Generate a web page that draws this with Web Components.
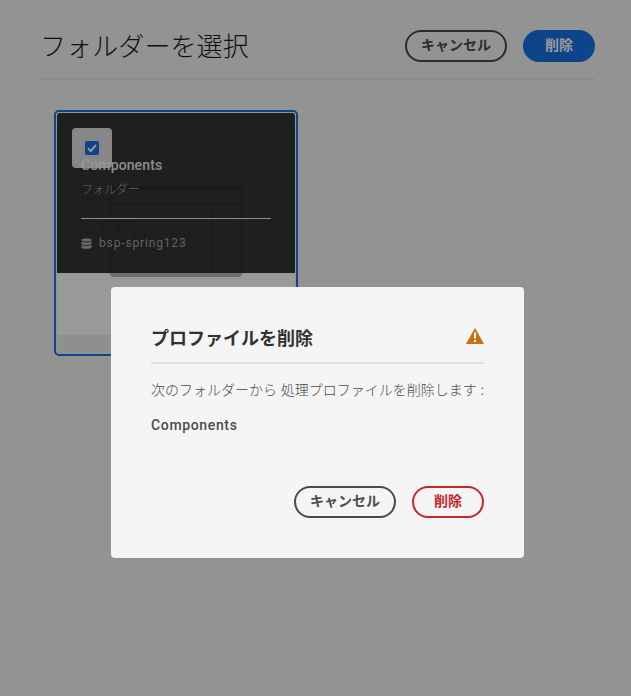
<!DOCTYPE html>
<html lang="ja"><head><meta charset="utf-8"><title>フォルダーを選択</title>
<style>
html,body{height:100%}
body{margin:0;background:#f5f5f5;color:#323232;font-family:"Noto Sans CJK JP",sans-serif;overflow:hidden}
</style></head><body>
<folder-page>
  <page-header heading="フォルダーを選択">
    <pill-button variant="outline">キャンセル</pill-button>
    <pill-button variant="primary">削除</pill-button>
  </page-header>
  <folder-card name="Components" kind="フォルダー" profile="bsp-spring123"></folder-card>
</folder-page>
<confirm-dialog heading="プロファイルを削除">
  <dialog-message>次のフォルダーから 処理プロファイルを削除します :</dialog-message>
  <dialog-item>Components</dialog-item>
  <pill-button slot="actions" variant="outline">キャンセル</pill-button>
  <pill-button slot="actions" variant="danger">削除</pill-button>
</confirm-dialog>
<script>
const define = (name, render) => customElements.define(name, class extends HTMLElement {
  constructor() {
    super();
    this.attachShadow({mode: 'open'}).innerHTML = render(this);
  }
});

define('folder-page', () => `
<style>:host{display:block;padding:28px 36px 0 40px}</style><slot></slot>`);

define('page-header', el => `
<style>
:host{display:flex;align-items:center;justify-content:space-between;box-sizing:border-box;height:52px;padding-bottom:14px;border-bottom:2px solid #eaeaea}
h1{margin:0;padding-bottom:2px;font-size:26px;line-height:34px;font-weight:300;letter-spacing:.1px;color:#1c1c1c;white-space:nowrap}
div{display:flex;gap:16px}
</style>
<h1>${el.getAttribute('heading')}</h1><div><slot></slot></div>`);

define('pill-button', () => `
<style>
:host{display:inline-block}
button{display:block;box-sizing:border-box;height:32px;padding:0 14px 3px;border:2px solid #4b4b4b;border-radius:16px;background:none;color:#4b4b4b;font:700 14px/25px "Noto Sans CJK JP",sans-serif;min-width:72px;white-space:nowrap}
:host([variant=primary]) button{background:#1473e6;border-color:#1473e6;color:#fff}
:host([variant=danger]) button{border-color:#c9252d;color:#c9252d}
</style><button><slot></slot></button>`);

define('folder-card', el => `
<style>
:host{display:block;box-sizing:border-box;width:244px;height:246px;margin:30px 0 0 14px;border:2px solid #1473e6;border-radius:5px;padding:1px}
.card{display:grid;grid-template-rows:222px 1fr;height:100%;background:#eee;border-radius:3px;overflow:hidden}
.asset{position:relative;background:#fff}
.art{position:absolute;left:0;top:0}
.info{position:relative;box-sizing:border-box;height:160px;padding:41px 24px 0;background:rgba(30,30,30,.9);color:#a4a4a4}
.name{font-family:Roboto,sans-serif;font-size:14px;line-height:22px;font-weight:500;letter-spacing:.12px;color:#e6e6e6}
.kind{margin-top:3px;font-size:12px;line-height:20px;font-weight:300;letter-spacing:-.4px}
hr{margin:19px 0 0;border:0;height:1px;background:#f0f0f0}
.profile{display:flex;align-items:center;gap:7px;margin-top:15px;font-family:Roboto,sans-serif;font-size:12px;line-height:18px;letter-spacing:.85px}
.check{position:absolute;left:15px;top:15px;width:40px;height:40px;border-radius:4px;background:rgba(255,255,255,.86);display:grid;place-items:center}
</style>
<div class="card"><div class="asset">
<svg class="art" width="238" height="222" fill="none" stroke="#b7b7b7">
<path d="M0 0H238V18H0Z" fill="#eee" stroke="none"/>
<path d="M54 101V79Q54 75 58 75H180Q184 75 184 79V158Q184 162 180 162H58Q54 162 54 158V130" stroke-width="4"/>
<path d="M55 91H184M156 91V162" stroke-width="2"/>
<rect x="45" y="108" width="34" height="20" rx="3" stroke-width="2"/>
<rect x="88" y="115" width="39" height="23" stroke-width="2" stroke-dasharray="3 2"/>
<path d="M61 111L62.4 115H66.5L63.2 117.5L64.4 121.5L61 119L57.6 121.5L58.8 117.5L55.5 115H59.6Z" fill="#b7b7b7" stroke="none"/>
</svg>
<div class="info"><div class="name">${el.getAttribute('name')}</div><div class="kind">${el.getAttribute('kind')}</div><hr>
<div class="profile"><svg width="11" height="11" viewBox="0 0 11 11"><path d="M.5 1.8C.5-.1 10.500-.1 10.500 1.800V9.200C10.500 11.200.5 11.200.5 9.200Z" fill="#b4b4b4"/><path d="M0 2.700C2.500 4.500 8.500 4.500 11 2.700M0 6.200C2.500 8 8.500 8 11 6.200" fill="none" stroke="#353535"/></svg><span>${el.getAttribute('profile')}</span></div></div>
<div class="check"><svg width="14" height="14"><rect width="14" height="14" rx="2" fill="#1473e6"/><path d="M3 7.200L5.700 10.200L11 3.800" fill="none" stroke="#fff" stroke-width="2"/></svg></div>
</div></div>`);

define('confirm-dialog', el => `
<style>
:host{position:fixed;inset:0;box-sizing:border-box;padding:287px 0 0 111px;background:rgba(0,0,0,.4)}
section{display:flex;flex-direction:column;box-sizing:border-box;width:413px;height:271px;padding:37px 40px 40px;border-radius:4px;background:#f5f5f5}
header{display:flex;justify-content:space-between;box-sizing:border-box;height:40px;border-bottom:2px solid #e0e0e0}
h2{margin:0;font-size:18px;line-height:27px;font-weight:700;color:#323232;white-space:nowrap}
header svg{margin-top:4px}
footer{display:flex;justify-content:flex-end;gap:16px;margin-top:auto}
</style>
<section><header><h2>${el.getAttribute('heading')}</h2>
<svg width="18" height="16"><path d="M9 .3L17.800 16H.2Z" fill="#cb6f10" stroke="#cb6f10" stroke-width=".4"/><path d="M8 4.500H10V10.500H8ZM8 12H10V14H8Z" fill="#fff"/></svg></header>
<slot></slot><footer><slot name="actions"></slot></footer></section>`);

define('dialog-message', () => `
<style>:host{display:block;margin-top:15px;font-size:14px;line-height:21px;font-weight:300;color:#4b4b4b;white-space:nowrap;word-spacing:.6px}</style><slot></slot>`);
define('dialog-item', () => `
<style>:host{display:block;margin-top:15px;font-family:Roboto,sans-serif;font-size:14px;line-height:21px;font-weight:500;letter-spacing:.65px;color:#4b4b4b}</style><slot></slot>`);
</script></body></html>
